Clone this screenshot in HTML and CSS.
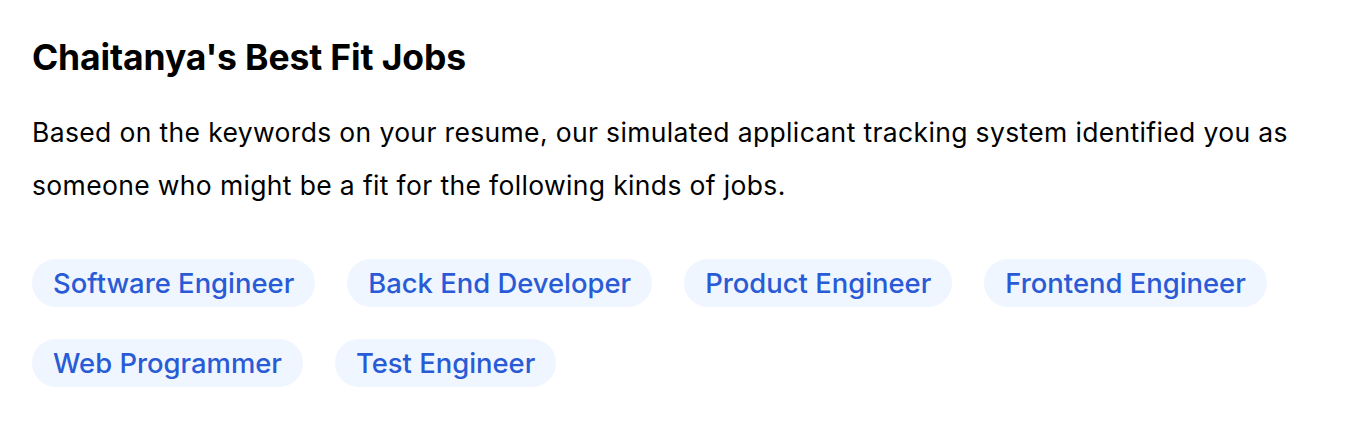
FILE: index.html
```html
<!DOCTYPE html>
<html lang="en">
<head>
<meta charset="utf-8">
<title>Best Fit Jobs</title>
<link rel="stylesheet" href="styles.css">
</head>
<body>
<section class="card">
  <h2 class="title">Chaitanya's Best Fit Jobs</h2>
  <p class="desc">Based on the keywords on your resume, our simulated applicant tracking system identified you as someone who might be a fit for the following kinds of jobs.</p>
  <ul class="tags">
    <li class="tag">Software Engineer</li>
    <li class="tag">Back End Developer</li>
    <li class="tag">Product Engineer</li>
    <li class="tag">Frontend Engineer</li>
    <li class="tag">Web Programmer</li>
    <li class="tag">Test Engineer</li>
  </ul>
</section>
</body>
</html>
```
FILE: styles.css
```css
* { box-sizing: border-box; }
html, body { margin: 0; padding: 0; background: #fff; }
body {
  font-family: Inter, "Noto Sans", sans-serif;
  color: #000;
}
.card {
  padding: 36px 32px 0 32px;
  width: 1366px;
}
.title {
  margin: 0;
  font-size: 35.5px;
  font-weight: 700;
  line-height: 44px;
  letter-spacing: -0.14px;
}
.desc {
  margin: 26px 0 0 0;
  font-size: 26.5px;
  line-height: 53px;
  font-weight: 400;
  letter-spacing: 0.35px;
}
.tags {
  list-style: none;
  margin: 47px 0 0 0;
  padding: 0;
  display: flex;
  flex-wrap: wrap;
  column-gap: 32px;
  row-gap: 32px;
}
.tag {
  background: #eff6ff;
  color: #2a5bd6;
  font-size: 27.4px;
  font-weight: 500;
  line-height: 48px;
  height: 48px;
  padding: 0 21px;
  border-radius: 24px;
}
```
